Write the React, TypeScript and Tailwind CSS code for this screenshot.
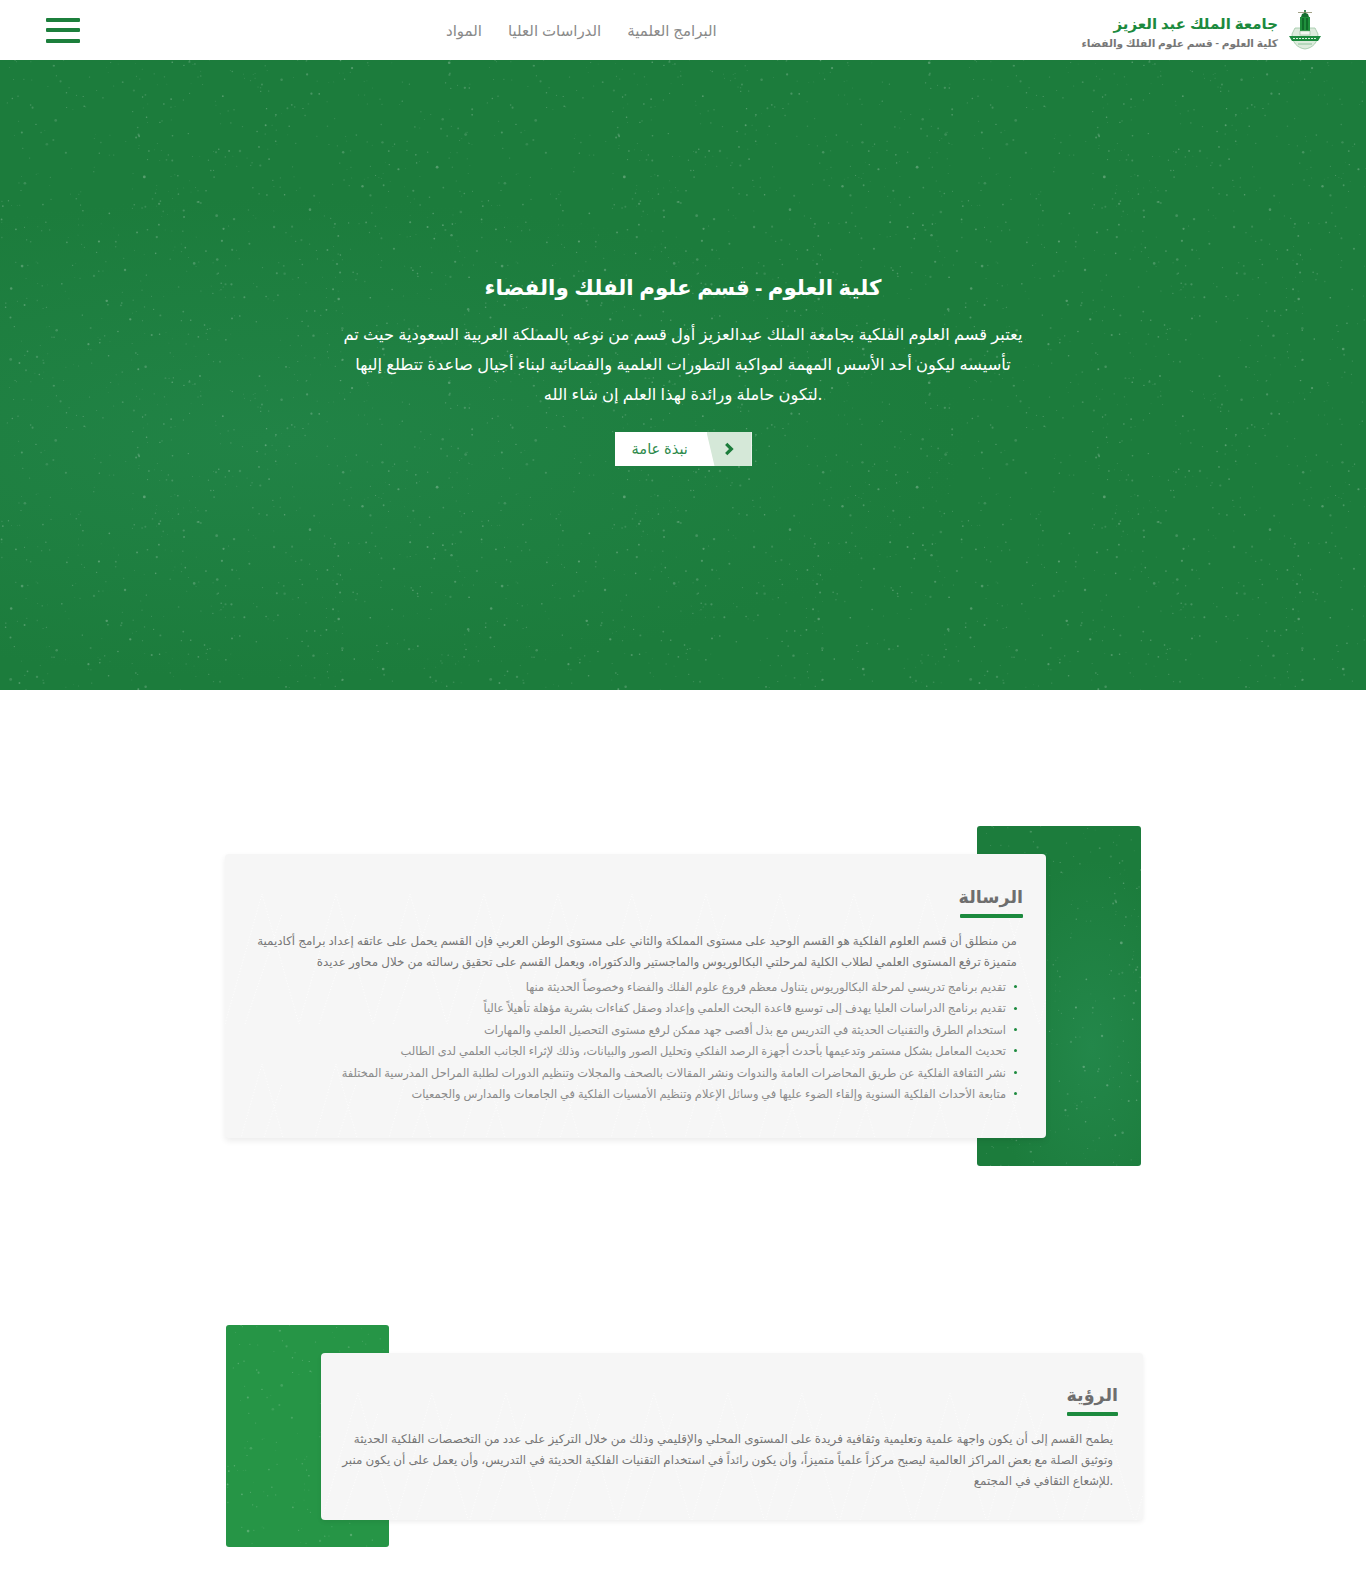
const FONT = "font-['Noto_Sans','DejaVu_Sans',sans-serif]";

const NAV_ITEMS = ['البرامج العلمية', 'الدراسات العليا', 'المواد'];

const HERO_LINES = [
  'يعتبر قسم العلوم الفلكية بجامعة الملك عبدالعزيز أول قسم من نوعه بالمملكة العربية السعودية حيث تم',
  'تأسيسه ليكون أحد الأسس المهمة لمواكبة التطورات العلمية والفضائية لبناء أجيال صاعدة تتطلع إليها',
  'لتكون حاملة ورائدة لهذا العلم إن شاء الله.',
];

const MISSION_LINES = [
  'من منطلق أن قسم العلوم الفلكية هو القسم الوحيد على مستوى المملكة والثاني على مستوى الوطن العربي فإن القسم يحمل على عاتقه إعداد برامج أكاديمية',
  'متميزة ترفع المستوى العلمي لطلاب الكلية لمرحلتي البكالوريوس والماجستير والدكتوراه، ويعمل القسم على تحقيق رسالته من خلال محاور عديدة',
];

const MISSION_ITEMS = [
  'تقديم برنامج تدريسي لمرحلة البكالوريوس يتناول معظم فروع علوم الفلك والفضاء وخصوصاً الحديثة منها',
  'تقديم برنامج الدراسات العليا يهدف إلى توسيع قاعدة البحث العلمي وإعداد وصقل كفاءات بشرية مؤهلة تأهيلاً عالياً',
  'استخدام الطرق والتقنيات الحديثة في التدريس مع بذل أقصى جهد ممكن لرفع مستوى التحصيل العلمي والمهارات',
  'تحديث المعامل بشكل مستمر وتدعيمها بأحدث أجهزة الرصد الفلكي وتحليل الصور والبيانات، وذلك لإثراء الجانب العلمي لدى الطالب',
  'نشر الثقافة الفلكية عن طريق المحاضرات العامة والندوات ونشر المقالات بالصحف والمجلات وتنظيم الدورات لطلبة المراحل المدرسية المختلفة',
  'متابعة الأحداث الفلكية السنوية وإلقاء الضوء عليها في وسائل الإعلام وتنظيم الأمسيات الفلكية في الجامعات والمدارس والجمعيات',
];

const VISION_LINES = [
  'يطمح القسم إلى أن يكون واجهة علمية وتعليمية وثقافية فريدة على المستوى المحلي والإقليمي وذلك من خلال التركيز على عدد من التخصصات الفلكية الحديثة',
  'وتوثيق الصلة مع بعض المراكز العالمية ليصبح مركزاً علمياً متميزاً، وأن يكون رائداً في استخدام التقنيات الفلكية الحديثة في التدريس، وأن يعمل على أن يكون منبر',
  'للإشعاع الثقافي في المجتمع.',
];

// small seeded generator so the dots stay put between renders
const DOTS = (() => {
  let s = 12345;
  const rnd = () => {
    s = (s * 16807) % 2147483647;
    return s / 2147483647;
  };
  return Array.from({ length: 800 }, () => ({
    x: rnd() * 480,
    y: rnd() * 320,
    r: 0.35 + rnd() * rnd() * 1.1,
    o: 0.1 + rnd() * 0.16,
  }));
})();

function Speckle({ id }: { id: string }) {
  return (
    <svg className="absolute inset-0 w-full h-full pointer-events-none" aria-hidden="true">
      <pattern id={id} width="480" height="320" patternUnits="userSpaceOnUse">
        {DOTS.map((d, i) => (
          <circle key={i} cx={d.x} cy={d.y} r={d.r} fill="#ffffff" opacity={d.o} />
        ))}
      </pattern>
      <rect width="100%" height="100%" fill={`url(#${id})`} />
    </svg>
  );
}

function CardLines({ id }: { id: string }) {
  return (
    <svg className="absolute inset-0 w-full h-full pointer-events-none" aria-hidden="true">
      <pattern id={id} width="74" height="170" patternUnits="userSpaceOnUse">
        <path d="M0 170 L37 40 L74 170 M20 170 L57 60" fill="none" stroke="#ffffff" strokeWidth="1" strokeDasharray="1 2" />
      </pattern>
      <rect width="100%" height="100%" fill={`url(#${id})`} opacity="0.8" />
    </svg>
  );
}

function Logo() {
  return (
    <svg viewBox="0 0 34 42" className="w-[34px] h-[42px]" aria-hidden="true">
      <path d="M4 25 C4 33 9 39 17 40 C25 39 30 33 30 25 L27 19 H7 Z" fill="#dcebdc" stroke="#9cc7a5" strokeWidth="0.8" />
      <rect x="12" y="8" width="10" height="14" fill="#1f8f3c" />
      <rect x="14" y="9" width="2" height="12" fill="#0f6b2a" />
      <rect x="18" y="9" width="2" height="12" fill="#0f6b2a" />
      <path d="M16.2 1 H17.8 V4 L20 5 L21 8 H13 L14 5 L16.2 4 Z" fill="#166f30" />
      <path d="M10 3.5 H24" stroke="#8a8a6a" strokeWidth="0.8" />
      <rect x="12" y="22" width="10" height="4" fill="#f3f7f1" stroke="#7fae88" strokeWidth="0.5" />
      <path d="M1 27 L33 27 L30 32 L4 32 Z" fill="#1c8a3e" />
      <path d="M5 29.5 H29" stroke="#d9efdc" strokeWidth="1" strokeDasharray="2 1" />
      <path d="M10 35 H24" stroke="#8cc49a" strokeWidth="1" />
    </svg>
  );
}

function SectionTitle({ title, barWidth }: { title: string; barWidth: string }) {
  return (
    <div className="flex flex-col items-end">
      <h2 className="text-[17.5px] leading-[26px] font-bold text-[#6e6e6e]">{title}</h2>
      <div className={`${barWidth} h-[4px] mt-[5px] rounded-[1px] bg-[#1c8a3e]`} />
    </div>
  );
}

export default function App() {
  return (
    <div className={`${FONT} bg-white min-h-screen overflow-hidden`}>
      <header className="relative z-10 h-[60px] flex items-center pl-[46px] pr-[44px] bg-white">
        <div className="flex flex-col gap-[6.5px]">
          <span className="block w-[34px] h-[4px] rounded-[1px] bg-[#1c7f3c]" />
          <span className="block w-[34px] h-[4px] rounded-[1px] bg-[#1c7f3c]" />
          <span className="block w-[34px] h-[4px] rounded-[1px] bg-[#1c7f3c]" />
        </div>
        <nav dir="rtl" className="ml-[366px] flex items-center gap-[26px] text-[15px] text-[#8a8a8a]">
          {NAV_ITEMS.map(item => (
            <a key={item} href="#">{item}</a>
          ))}
        </nav>
        <div className="ml-auto flex items-center gap-[10px]">
          <div className="text-right pt-[3px]" dir="rtl">
            <div className="text-[15px] leading-[22px] font-bold text-[#1c8a3e]">جامعة الملك عبد العزيز</div>
            <div className="text-[10.6px] leading-[18px] font-semibold text-[#777777]">كلية العلوم - قسم علوم الفلك والفضاء</div>
          </div>
          <Logo />
        </div>
      </header>

      <section className="relative h-[630px] bg-[#1c7c3c] bg-[radial-gradient(ellipse_at_20%_60%,#218346_0%,transparent_45%)] flex flex-col items-center text-white">
        <Speckle id="hero-speckle" />
        <h1 className="relative mt-[209px] text-[21.4px] leading-[36px] font-bold" dir="rtl">كلية العلوم - قسم علوم الفلك والفضاء</h1>
        <div className="relative mt-[14px] text-center text-[16.3px] leading-[30px]">
          {HERO_LINES.map(line => (
            <p key={line} className="whitespace-nowrap">{line}</p>
          ))}
        </div>
        <a href="#" className="relative mt-[23px] w-[137px] h-[34px] bg-white flex items-center overflow-hidden">
          <span className="ml-[17px] text-[14.6px] text-[#2d8a4b]" dir="rtl">نبذة عامة</span>
          <span className="absolute inset-y-0 right-0 w-[45px] bg-[#d5e8d8] [clip-path:polygon(0_0,100%_0,100%_100%,8px_100%)] flex items-center justify-center">
            <svg viewBox="0 0 12 14" className="w-[12px] h-[14px]" aria-hidden="true">
              <path d="M3.2 1.8 L8.4 7 L3.2 12.2" fill="none" stroke="#1c7c3b" strokeWidth="3.2" />
            </svg>
          </span>
        </a>
      </section>

      <section className="relative mt-[136px] ml-[225px] w-[916px] pt-[28px] pb-[28px]">
        <div className="absolute inset-y-0 right-0 w-[164px] rounded-[3px] overflow-hidden bg-[#1c7c3c] bg-[radial-gradient(ellipse_at_70%_65%,#23874a_0%,transparent_60%)]">
          <Speckle id="mission-speckle" />
        </div>
        <div className="relative mr-[95px] h-[284px] rounded-[4px] bg-[#f6f6f6] shadow-[0_3px_6px_rgba(0,0,0,0.08)] overflow-hidden pt-[29px] pr-[23px] pl-[20px]">
          <CardLines id="mission-lines" />
          <div className="relative">
            <SectionTitle title="الرسالة" barWidth="w-[63px]" />
            <div dir="rtl" className="mt-[12px] pr-[6px] text-[11.9px] leading-[21px] font-medium text-[#777777]">
              {MISSION_LINES.map(line => (
                <p key={line} className="whitespace-nowrap">{line}</p>
              ))}
            </div>
            <ul dir="rtl" className="mt-[4px] pr-[6px] text-[11.4px] leading-[21.4px] text-[#8a8a8a]">
              {MISSION_ITEMS.map(item => (
                <li key={item} className="flex items-center gap-[8px] whitespace-nowrap">
                  <span className="w-[3px] h-[3px] rounded-full bg-[#1c8a3e] shrink-0" />
                  {item}
                </li>
              ))}
            </ul>
          </div>
        </div>
      </section>

      <section className="relative mt-[159px] mb-[48px] ml-[226px] w-[917px] pt-[28px] pb-[27px]">
        <div className="absolute inset-y-0 left-0 w-[163px] rounded-[3px] overflow-hidden bg-[#269546]">
          <Speckle id="vision-speckle" />
        </div>
        <div className="relative ml-[95px] h-[167px] rounded-[4px] bg-[#f6f6f6] shadow-[0_2px_5px_rgba(0,0,0,0.07)] overflow-hidden pt-[28px] pr-[25px] pl-[20px]">
          <CardLines id="vision-lines" />
          <div className="relative">
            <SectionTitle title="الرؤية" barWidth="w-[51px]" />
            <div className="mt-[12px] pr-[5px] text-right text-[11.9px] leading-[21px] text-[#777777]">
              {VISION_LINES.map(line => (
                <p key={line} className="whitespace-nowrap">{line}</p>
              ))}
            </div>
          </div>
        </div>
      </section>
    </div>
  );
}
